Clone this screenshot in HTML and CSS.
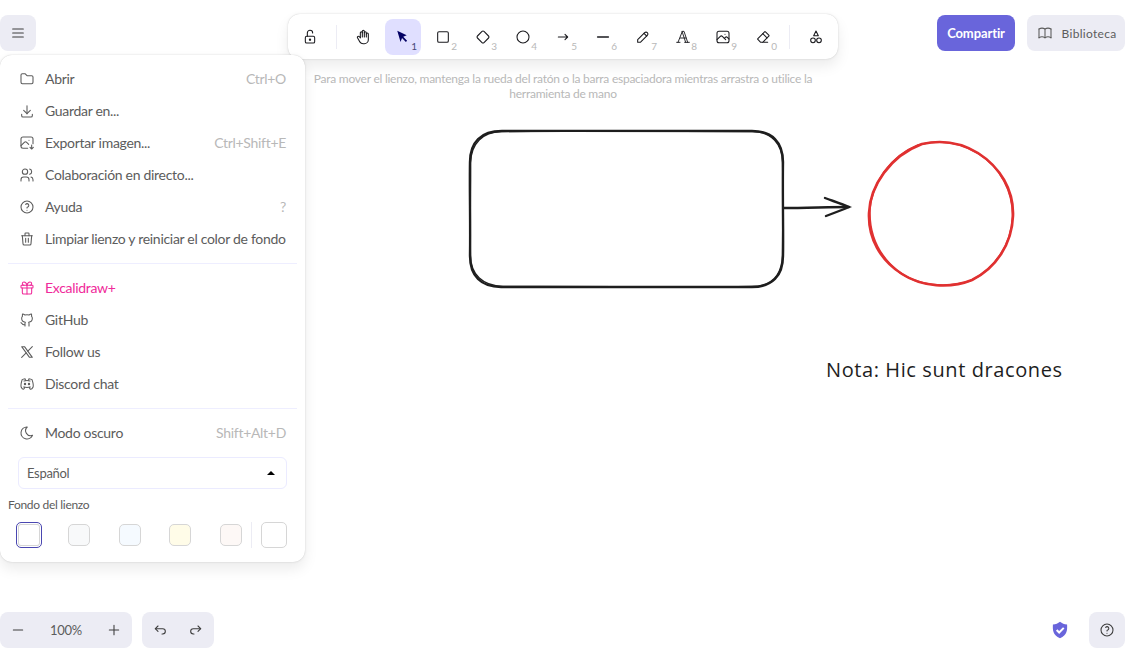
FILE: index.html
```html
<!DOCTYPE html>
<html lang="es">
<head>
  <meta charset="UTF-8" />
  <title>Excalidraw</title>
  <link rel="stylesheet" href="styles.css">
</head>
<body>
  <svg class="canvas" width="1134" height="658" viewBox="0 0 1134 658" fill="none">
    <g stroke="#1e1e1e" stroke-linecap="round">
      <path stroke-width="2.400" d="M502 131 C590 130.500 690 131.500 752 131 C772 131 783 142 783 162 C782.500 200 783.500 235 783 256 C783 276 772 287 752 287 C680 286.500 580 287.500 501 287 C481 287 470 276 470 256 C470.500 220 469.500 190 470 162 C470 142 481 131 502 131 Z"/>
      <path stroke-width="1.400" d="M501 131.500 C600 130.500 680 131 753 131.500 C771 132 782.500 143 782.500 163 C783.500 200 782.500 230 782.500 255 C782 275 771.500 286.500 751 286.500 C670 287.500 590 286 503 286.500 C483 286 470.500 275 470.500 255 C469.500 220 471 190 470.500 163 C471 143 483 132 501 131.500 Z"/>
      <path stroke-width="2.400" d="M784 208 C805 208 830 207 849 207"/>
      <path stroke-width="2.400" d="M825 198 C833 201 842 204 849 207 C842 210 834 213 826 216"/>
    </g>
    <g stroke="#e03131" stroke-linecap="round">
      <path stroke-width="2.600" d="M922 144 C940 140 960 142 978 153 C1000 167 1014 190 1013 216 C1012 244 996 268 972 280 C950 289 922 287 902 274 C880 260 868 238 869 213 C870 186 890 156 922 144 Z"/>
      <path stroke-width="1.600" d="M918 145 C936 140 958 141 979 154 C1001 168 1013 192 1012.500 217 C1011 245 995 269 970 281 C946 288 918 286 899 272 C879 256 869 234 870 209 C872 184 890 156 918 145 Z"/>
    </g>
    <text class="note" x="826" y="377" textLength="236">Nota: Hic sunt dracones</text>
  </svg>

  <header class="top">
    <div class="top-left">
      <button class="island-btn menu-btn" aria-label="Menú">
        <svg class="ic" viewBox="0 0 24 24"><path d="M4 6h16M4 12h16M4 18h16"/></svg>
      </button>
    </div>

    <div class="top-center">
      <div class="toolbar">
        <button class="tool"><svg class="ic" viewBox="0 0 24 24"><rect x="5" y="11" width="14" height="10" rx="2"/><circle cx="12" cy="16" r="1"/><path d="M8 11V6a4 4 0 0 1 8 0"/></svg></button>
        <span class="tool-sep"></span>
        <button class="tool"><svg class="ic" viewBox="0 0 24 24"><path d="M8 13V5.500a1.500 1.500 0 0 1 3 0V12"/><path d="M11 5.500v-2a1.500 1.500 0 1 1 3 0V12"/><path d="M14 5.500a1.500 1.500 0 0 1 3 0V12"/><path d="M17 7.500a1.500 1.500 0 0 1 3 0V16a6 6 0 0 1-6 6h-2 .208a6 6 0 0 1-5.012-2.700L7 19c-.312-.479-1.407-2.388-3.286-5.728a1.500 1.500 0 0 1 .536-2.022 1.867 1.867 0 0 1 2.280.280L8 13"/></svg></button>
        <button class="tool tool-active">
          <svg class="ic-fill" viewBox="0 0 22 22"><path d="M4 3.500 15.500 9l-4.200 1.700 4.700 4.800-1.500 1.500-4.700-4.800L8 17z"/></svg>
          <span class="key">1</span>
        </button>
        <button class="tool"><svg class="ic" viewBox="0 0 24 24"><rect x="4" y="4" width="16" height="16" rx="2"/></svg><span class="key">2</span></button>
        <button class="tool"><svg class="ic" viewBox="0 0 24 24"><path d="M10.500 3.700 3.700 10.500a2.100 2.100 0 0 0 0 3l6.800 6.800a2.100 2.100 0 0 0 3 0l6.800-6.800a2.100 2.100 0 0 0 0-3l-6.800-6.800a2.100 2.100 0 0 0-3 0z"/></svg><span class="key">3</span></button>
        <button class="tool"><svg class="ic" viewBox="0 0 24 24"><circle cx="12" cy="12" r="9"/></svg><span class="key">4</span></button>
        <button class="tool"><svg class="ic" viewBox="0 0 24 24"><path d="M5 12h14M15 16l4-4M15 8l4 4"/></svg><span class="key">5</span></button>
        <button class="tool"><svg class="ic ic-thick" viewBox="0 0 24 24"><path d="M4 12h16"/></svg><span class="key">6</span></button>
        <button class="tool"><svg class="ic" viewBox="0 0 24 24"><path d="M4 20h4L18.500 9.500a2.800 2.800 0 0 0-4-4L4 16v4"/><path d="m13.500 6.500 4 4"/></svg><span class="key">7</span></button>
        <button class="tool"><svg class="ic ic-thin" viewBox="0 0 24 24"><path d="M2.500 20h5M14.500 20h7M4.500 20 11 3.500h2.500L19 20M10.500 3.500 16 20M8 13.500h8.500"/></svg><span class="key">8</span></button>
        <button class="tool"><svg class="ic" viewBox="0 0 24 24"><rect x="3" y="3.500" width="18" height="17" rx="3"/><path d="m3 16 5-5c1-1 2-1 3 0l5 5"/><path d="m14 14 1.500-1.500c1-1 2-1 3 0L21 15"/><path d="M15 8h.01"/></svg><span class="key">9</span></button>
        <button class="tool"><svg class="ic" viewBox="0 0 24 24"><path d="M19 20H8.500l-4.210-4.300a1 1 0 0 1 0-1.410l10-10a1 1 0 0 1 1.410 0l5 5a1 1 0 0 1 0 1.410L11.500 20"/><path d="M18 13.300 11.700 7"/></svg><span class="key">0</span></button>
        <span class="tool-sep"></span>
        <button class="tool"><svg class="ic" viewBox="0 0 24 24"><path d="M12 3 8.500 10h7z"/><circle cx="7.500" cy="17" r="3.500"/><circle cx="16.500" cy="17" r="3.500"/></svg></button>
      </div>
      <p class="hint">Para mover el lienzo, mantenga la rueda del ratón o la barra espaciadora mientras arrastra o utilice la herramienta de mano</p>
    </div>

    <div class="top-right">
      <button class="share-btn">Compartir</button>
      <button class="island-btn library-btn">
        <svg class="ic" viewBox="0 0 24 24"><path d="M3 19a9 9 0 0 1 9 0 9 9 0 0 1 9 0"/><path d="M3 6a9 9 0 0 1 9 0 9 9 0 0 1 9 0"/><path d="M3 6v13M12 6v13M21 6v13"/></svg>
        Biblioteca
      </button>
    </div>
  </header>

  <nav class="menu">
    <a class="row"><svg class="ic" viewBox="0 0 24 24"><path d="M5 4h4l3 3h7a2 2 0 0 1 2 2v8a2 2 0 0 1-2 2H5a2 2 0 0 1-2-2V6a2 2 0 0 1 2-2"/></svg><span class="label">Abrir</span><span class="shortcut">Ctrl+O</span></a>
    <a class="row"><svg class="ic" viewBox="0 0 24 24"><path d="M4 17v2a2 2 0 0 0 2 2h12a2 2 0 0 0 2-2v-2"/><path d="m7 11 5 5 5-5"/><path d="M12 4v12"/></svg><span class="label">Guardar en...</span></a>
    <a class="row"><svg class="ic" viewBox="0 0 24 24"><path d="M13 20H6a3 3 0 0 1-3-3V6a3 3 0 0 1 3-3h12a3 3 0 0 1 3 3v7"/><path d="m3 16 5-5c1-1 2.500-1 3.500 0l3 3"/><path d="M15 8h.01"/><path d="M19 15v6M16.500 18.500 19 21l2.500-2.500"/></svg><span class="label">Exportar imagen...</span><span class="shortcut">Ctrl+Shift+E</span></a>
    <a class="row"><svg class="ic" viewBox="0 0 24 24"><circle cx="9" cy="7" r="4"/><path d="M3 21v-2a4 4 0 0 1 4-4h4a4 4 0 0 1 4 4v2"/><path d="M16 3.130a4 4 0 0 1 0 7.750"/><path d="M21 21v-2a4 4 0 0 0-3-3.850"/></svg><span class="label">Colaboración en directo...</span></a>
    <a class="row"><svg class="ic" viewBox="0 0 24 24"><circle cx="12" cy="12" r="9"/><path d="M12 17v.01"/><path d="M12 13.500a1.500 1.500 0 0 1 1-1.500 2.600 2.600 0 1 0-3-4"/></svg><span class="label">Ayuda</span><span class="shortcut">?</span></a>
    <a class="row"><svg class="ic" viewBox="0 0 24 24"><path d="M4 7h16M10 11v6M14 11v6"/><path d="m5 7 1 12a2 2 0 0 0 2 2h8a2 2 0 0 0 2-2l1-12"/><path d="M9 7V4a1 1 0 0 1 1-1h4a1 1 0 0 1 1 1v3"/></svg><span class="label">Limpiar lienzo y reiniciar el color de fondo</span></a>
    <hr class="divider">
    <a class="row row-pink"><svg class="ic" viewBox="0 0 24 24"><rect x="3" y="8" width="18" height="4" rx="1"/><path d="M12 8v13"/><path d="M19 12v7a2 2 0 0 1-2 2H7a2 2 0 0 1-2-2v-7"/><path d="M7.500 8a2.500 2.500 0 0 1 0-5A4.800 8 0 0 1 12 8a4.800 8 0 0 1 4.500-5 2.500 2.500 0 0 1 0 5"/></svg><span class="label">Excalidraw+</span></a>
    <a class="row"><svg class="ic" viewBox="0 0 24 24"><path d="M9 19c-4.300 1.400-4.300-2.500-6-3m12 5v-3.500c0-1 .1-1.400-.5-2 2.800-.3 5.500-1.400 5.500-6a4.600 4.600 0 0 0-1.300-3.200 4.200 4.200 0 0 0-.1-3.200s-1.100-.3-3.500 1.300a12.300 12.300 0 0 0-6.200 0C6.500 2.800 5.400 3.100 5.400 3.100a4.200 4.200 0 0 0-.1 3.200A4.600 4.600 0 0 0 4 9.500c0 4.600 2.700 5.700 5.500 6-.6.6-.6 1.200-.5 2V21"/></svg><span class="label">GitHub</span></a>
    <a class="row"><svg class="ic" viewBox="0 0 24 24"><path d="M4 4l11.733 16H20L8.267 4z"/><path d="m4 20 6.768-6.768m2.460-2.460L20 4"/></svg><span class="label">Follow us</span></a>
    <a class="row"><svg class="ic" viewBox="0 0 24 24"><circle cx="9" cy="12" r="1"/><circle cx="15" cy="12" r="1"/><path d="M7.500 7.500c3.500-1 5.500-1 9 0"/><path d="M7 16.500c3.500 1 6.500 1 10 0"/><path d="M15.500 17c0 1 1.500 3 2 3 1.500 0 2.833-1.667 3.500-3 .667-1.667.5-5.833-1.500-11.500-1.457-1.015-3-1.340-4.500-1.500l-1 2.500"/><path d="M8.500 17c0 1-1.356 3-1.832 3-1.429 0-2.698-1.667-3.333-3-.635-1.667-.476-5.833 1.428-11.500C6.151 4.485 7.545 4.160 9 4l1 2.500"/></svg><span class="label">Discord chat</span></a>
    <hr class="divider">
    <a class="row"><svg class="ic" viewBox="0 0 24 24"><path d="M12 3h.393a7.500 7.500 0 0 0 7.920 12.446A9 9 0 1 1 12 2.992z"/></svg><span class="label">Modo oscuro</span><span class="shortcut">Shift+Alt+D</span></a>
    <div class="lang">Español<span class="caret"></span></div>
    <div class="bg-title">Fondo del lienzo</div>
    <div class="swatches">
      <span class="swatch swatch-on"></span>
      <span class="swatch c2"></span>
      <span class="swatch c3"></span>
      <span class="swatch c4"></span>
      <span class="swatch c5"></span>
      <span class="swatch-sep"></span>
      <span class="swatch swatch-big"></span>
    </div>
  </nav>

  <footer class="bottom">
    <div class="bottom-left">
      <div class="island zoom">
        <button class="flat-btn"><svg class="ic" viewBox="0 0 24 24"><path d="M5 12h14"/></svg></button>
        <span class="zoom-val">100%</span>
        <button class="flat-btn"><svg class="ic" viewBox="0 0 24 24"><path d="M12 5v14M5 12h14"/></svg></button>
      </div>
      <div class="island">
        <button class="flat-btn"><svg class="ic" viewBox="0 0 24 24"><path d="M9 14l-4-4 4-4"/><path d="M5 10h11a4 4 0 1 1 0 8h-1"/></svg></button>
        <button class="flat-btn"><svg class="ic" viewBox="0 0 24 24"><path d="m15 14 4-4-4-4"/><path d="M19 10H8a4 4 0 1 0 0 8h1"/></svg></button>
      </div>
    </div>
    <div class="bottom-right">
      <svg class="shield" viewBox="0 0 24 24"><path d="M12 2c2.500 2 5 3 8.500 3.300.3 6.500.2 12.700-8.500 16.700C3.300 18 3.200 11.800 3.500 5.300 7 5 9.500 4 12 2z"/><path class="shield-tick" d="m8 12 3 3 5.500-5.500"/></svg>
      <button class="island-btn"><svg class="ic" viewBox="0 0 24 24"><circle cx="12" cy="12" r="9"/><path d="M12 17v.01"/><path d="M12 13.500a1.500 1.500 0 0 1 1-1.500 2.600 2.600 0 1 0-3-4"/></svg></button>
    </div>
  </footer>
</body>
</html>
```

FILE: styles.css
```css
* {
  box-sizing: border-box;
}
body {
  margin: 0;
  height: 100vh;
  overflow: hidden;
  position: relative;
  display: flex;
  flex-direction: column;
  justify-content: space-between;
  background: #fff;
  color: #5c5c5c;
  font-family: "Lato", sans-serif;
  font-size: 14px;
  letter-spacing: -.3px;
}
button {
  font-family: inherit;
  border: none;
  padding: 0;
  cursor: pointer;
}
.ic {
  width: 16px;
  height: 16px;
  flex: none;
  fill: none;
  stroke: currentColor;
  stroke-width: 1.600;
  stroke-linecap: round;
  stroke-linejoin: round;
}
.ic-thick {
  stroke-width: 2.400;
}
.ic-thin {
  stroke-width: 1.400;
}

/* drawing */
.canvas {
  position: absolute;
  left: 0;
  top: 0;
}
.note {
  font-family: "Open Sans", sans-serif;
  font-size: 20px;
  letter-spacing: 0;
  fill: #1e1e1e;
}

/* top bar */
.top {
  position: relative;
  display: flex;
  padding: 14px 9px 0 0;
}
.top-left {
  width: 288px;
  padding-top: 1px;
}
.top-center {
  width: 550px;
}
.top-right {
  flex: 1;
  display: flex;
  justify-content: flex-end;
  align-items: flex-start;
  gap: 12px;
  padding-top: 1px;
}
.island-btn {
  width: 36px;
  height: 36px;
  border-radius: 8px;
  background: #ececf4;
  color: #3d3d3d;
  display: flex;
  align-items: center;
  justify-content: center;
}
.toolbar {
  display: flex;
  align-items: center;
  gap: 4px;
  padding: 5px 4px 4px;
  background: #fff;
  border-radius: 12px;
  box-shadow: 0 0 1px rgba(0,0,0,.17), 0 0 3px rgba(0,0,0,.08), 0 7px 14px rgba(0,0,0,.08);
}
.tool {
  position: relative;
  width: 36px;
  height: 36px;
  border-radius: 8px;
  background: none;
  color: #1b1b1f;
  display: flex;
  align-items: center;
  justify-content: center;
}
.tool-active {
  background: #e0dfff;
}
.ic-fill {
  width: 18px;
  height: 18px;
  fill: #030064;
}
.tool-sep {
  width: 1px;
  height: 24px;
  margin: 0 4px;
  background: #ececf4;
}
.key {
  position: absolute;
  right: 4px;
  bottom: 3px;
  font-size: 10px;
  line-height: 12px;
  letter-spacing: 0;
  color: #b8b8b8;
}
.tool-active .key {
  color: #4a4a7a;
}
.hint {
  margin: 12px auto 0;
  width: 505px;
  text-align: center;
  font-size: 12px;
  line-height: 15px;
  letter-spacing: -.25px;
  color: #b8b8b8;
}
.share-btn {
  width: 78px;
  height: 36px;
  border-radius: 8px;
  background: #6965db;
  color: #fff;
  font-size: 13px;
  font-weight: 700;
  letter-spacing: -.1px;
}
.library-btn {
  width: 98px;
  gap: 9px;
  padding-left: 1px;
  font-size: 12px;
  letter-spacing: .3px;
  color: #5c5c5c;
}

/* main menu */
.menu {
  position: absolute;
  left: 0;
  top: 55px;
  width: 305px;
  height: 507px;
  padding: 8px;
  background: #fff;
  border-radius: 12px;
  box-shadow: 0 0 1px rgba(0,0,0,.17), 0 0 3px rgba(0,0,0,.08), 0 7px 14px rgba(0,0,0,.08);
}
.row {
  height: 32px;
  padding: 0 11px 0 11px;
  display: flex;
  align-items: center;
  gap: 10px;
  color: #5c5c5c;
}
.label,
.shortcut {
  margin-bottom: 2px;
}
.label {
  flex: 1;
  white-space: nowrap;
}
.shortcut {
  color: #b8b8b8;
}
.row-pink {
  color: #f02a9a;
}
.divider {
  margin: 8px 0;
  border: none;
  border-top: 1px solid #eeeeff;
}
.lang {
  margin: 8px 10px 0;
  height: 32px;
  padding: 0 11px 0 8px;
  border: 1px solid #ebebff;
  border-radius: 6px;
  display: flex;
  align-items: center;
  justify-content: space-between;
  font-size: 13px;
}
.caret {
  width: 0;
  height: 0;
  border-left: 4px solid transparent;
  border-right: 4px solid transparent;
  border-bottom: 4px solid #000;
}
.bg-title {
  margin-top: 8px;
  font-size: 12px;
  line-height: 16px;
}
.swatches {
  margin-top: 9px;
  padding: 0 10px 0 8px;
  display: flex;
  align-items: center;
}
.swatch {
  width: 22px;
  height: 22px;
  margin-right: 28.500px;
  border-radius: 5px;
  border: 1px solid #d6d6d6;
}
.swatch-on {
  width: 26px;
  height: 26px;
  margin-right: 26px;
  border: 1px solid #4a47b1;
  box-shadow: inset 0 0 0 1px #fff, inset 0 0 0 2px #d6d6d6;
}
.c2 { background: #f8f9fa; }
.c3 { background: #f5faff; }
.c4 { background: #fffce8; }
.c5 { background: #fdf8f6; margin-right: 9px; }
.swatch-sep {
  width: 1px;
  height: 26px;
  background: #ececf4;
  margin-right: 9px;
}
.swatch-big {
  width: 26px;
  height: 26px;
  margin-right: 0;
}

/* bottom */
.bottom {
  position: relative;
  display: flex;
  justify-content: space-between;
  align-items: center;
  padding: 0 9px 10px 0;
}
.bottom-left,
.bottom-right {
  display: flex;
  align-items: center;
  gap: 10px;
}
.bottom-right {
  gap: 19px;
}
.island {
  display: flex;
  align-items: center;
  height: 36px;
  background: #ececf4;
  border-radius: 8px;
}
.flat-btn {
  width: 36px;
  height: 36px;
  background: none;
  color: #3d3d3d;
  display: flex;
  align-items: center;
  justify-content: center;
}
.zoom-val {
  width: 60px;
  text-align: center;
  font-size: 13px;
  color: #5c5c5c;
}
.shield {
  width: 20px;
  height: 20px;
  fill: #6965db;
}
.shield-tick {
  fill: none;
  stroke: #fff;
  stroke-width: 2.400;
}
```
